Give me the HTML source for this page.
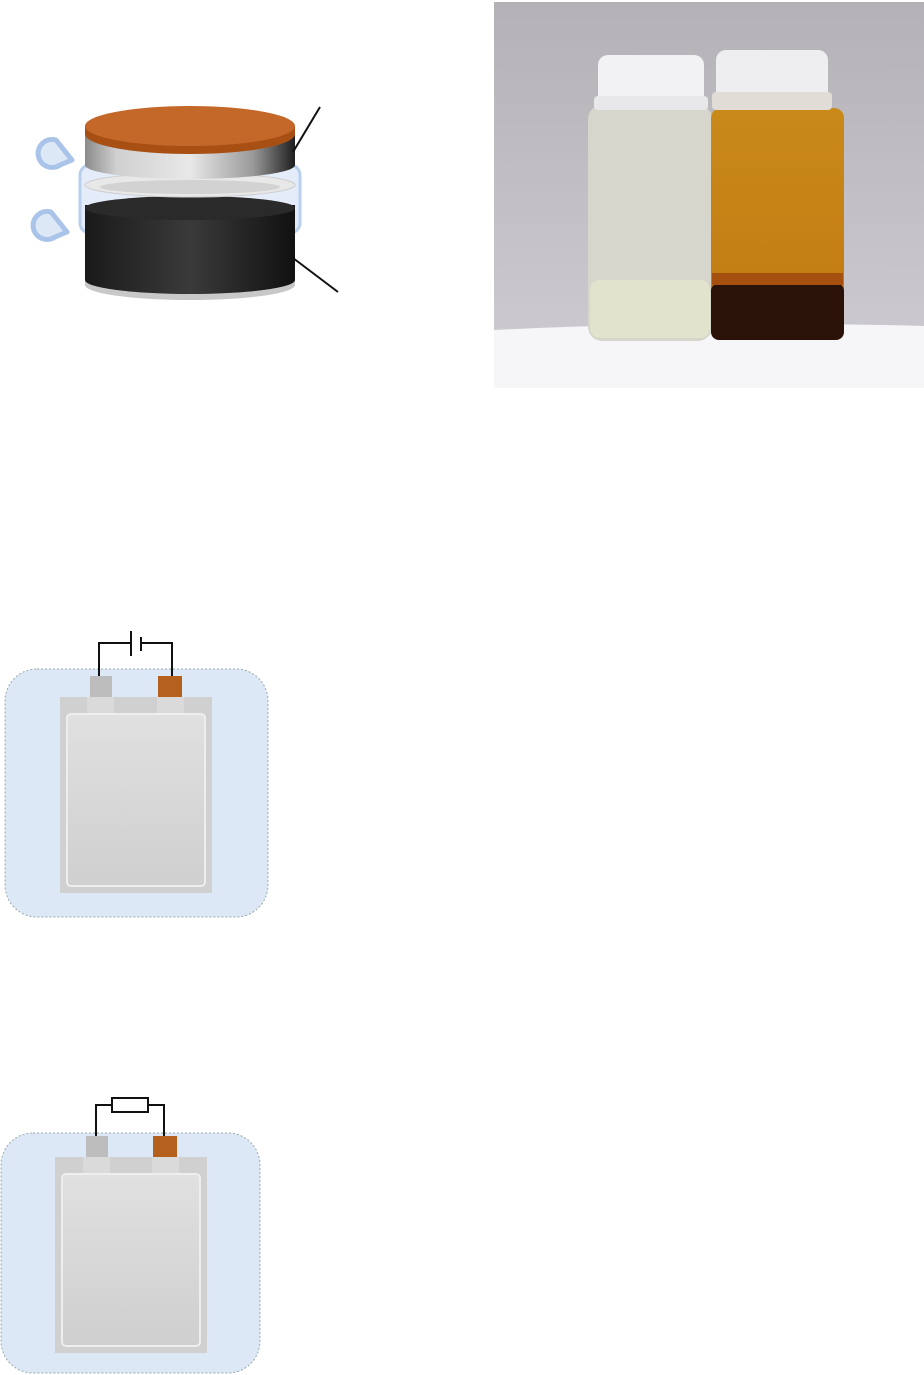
<!DOCTYPE html>
<html><head><meta charset="utf-8"><style>
html,body{margin:0;padding:0;background:#fff;width:924px;height:1375px;overflow:hidden}
svg{position:absolute;left:0;top:0}
</style></head><body>
<svg width="924" height="1375" viewBox="0 0 924 1375" xmlns="http://www.w3.org/2000/svg">
<defs>
<linearGradient id="silver" x1="0" x2="1"><stop offset="0" stop-color="#8a8a8a"/><stop offset="0.15" stop-color="#d0d0d0"/><stop offset="0.5" stop-color="#e8e8e8"/><stop offset="0.8" stop-color="#9a9a9a"/><stop offset="1" stop-color="#1e1e1e"/></linearGradient>
<linearGradient id="black" x1="0" x2="1"><stop offset="0" stop-color="#1a1a1a"/><stop offset="0.5" stop-color="#3a3a3a"/><stop offset="1" stop-color="#111"/></linearGradient>
<linearGradient id="bg" x1="0" x2="0" y1="0" y2="1"><stop offset="0" stop-color="#b4b2b7"/><stop offset="1" stop-color="#cfcdd2"/></linearGradient>
<linearGradient id="amber" x1="0" x2="0" y1="0" y2="1"><stop offset="0" stop-color="#c98a1a"/><stop offset="1" stop-color="#c27a12"/></linearGradient>
<linearGradient id="pouch" x1="0" x2="0" y1="0" y2="1"><stop offset="0" stop-color="#e0e0e0"/><stop offset="1" stop-color="#cfcfcf"/></linearGradient>
</defs>
<!-- coin cell -->
<g>
<path d="M72,160 L56,140 A14,14 0 1,0 60,165 Z" fill="#dde8f6" stroke="#a9c4e8" stroke-width="5" stroke-linejoin="round"/>
<path d="M67,232 L51,212 A14,14 0 1,0 55,237 Z" fill="#dde8f6" stroke="#a9c4e8" stroke-width="5" stroke-linejoin="round"/>
<rect x="80" y="165" width="220" height="68" rx="10" fill="#e3ecf8" stroke="#b9cfee" stroke-width="3"/>
<path d="M85,205 L85,285 A105,15 0 0,0 295,285 L295,205z" fill="#c8c8c8"/>
<path d="M85,205 L85,280 A105,14 0 0,0 295,280 L295,205z" fill="url(#black)"/>
<ellipse cx="190" cy="208" rx="105" ry="12" fill="#2a2a2a"/>
<ellipse cx="190" cy="185" rx="105" ry="12" fill="#e8e8e8" stroke="#cfcfcf"/>
<ellipse cx="190" cy="187" rx="90" ry="7" fill="#d2d2d2"/>
<path d="M85,130 L85,165 A105,14 0 0,0 295,165 L295,130z" fill="url(#silver)"/>
<path d="M85,126 L85,134 A105,20 0 0,0 295,134 L295,126z" fill="#a84f14"/>
<ellipse cx="190" cy="126" rx="105" ry="20" fill="#c4682a"/>
<line x1="293" y1="152" x2="320" y2="107" stroke="#111" stroke-width="2"/>
<line x1="293" y1="258" x2="338" y2="292" stroke="#111" stroke-width="2"/>
</g>
<!-- photo -->
<g>
<rect x="494" y="2" width="430" height="386" fill="url(#bg)"/>
<path d="M494,330 Q700,320 924,326 L924,388 L494,388z" fill="#f6f6f8"/>
<rect x="588" y="105" width="124" height="236" rx="14" fill="#d6d6cc"/>
<rect x="590" y="280" width="120" height="58" rx="10" fill="#e2e3cc"/>
<rect x="598" y="55" width="106" height="55" rx="10" fill="#f2f2f4"/>
<rect x="594" y="96" width="114" height="14" rx="4" fill="#e8e8ea"/>
<rect x="711" y="108" width="133" height="232" rx="10" fill="url(#amber)"/>
<rect x="711" y="283" width="133" height="57" rx="8" fill="#2a1208"/>
<rect x="712" y="273" width="131" height="12" fill="#a5500f"/>
<rect x="716" y="50" width="112" height="56" rx="10" fill="#eeeef0"/>
<rect x="712" y="92" width="120" height="18" rx="4" fill="#e0dcd6"/>
</g>
<!-- pouch 1 -->
<g>
<rect x="5" y="669" width="263" height="248" rx="32" fill="#dce8f5" stroke="#9aa" stroke-width="1" stroke-dasharray="2,2"/>
<path d="M99,676 V643 H130 M141,643 H172 V676" fill="none" stroke="#111" stroke-width="2"/>
<line x1="131" y1="631" x2="131" y2="656" stroke="#111" stroke-width="2"/>
<line x1="141" y1="637" x2="141" y2="651" stroke="#111" stroke-width="2"/>
<rect x="90" y="676" width="22" height="21" fill="#bdbdbd"/>
<rect x="158" y="676" width="24" height="21" fill="#b5601c"/>
<rect x="60" y="697" width="152" height="196" fill="#d0d0d0"/>
<rect x="87" y="697" width="27" height="18" fill="#dadada"/>
<rect x="157" y="697" width="27" height="18" fill="#dadada"/>
<rect x="67" y="714" width="138" height="172" rx="4" fill="url(#pouch)" stroke="#eee" stroke-width="2"/>
</g>
<!-- pouch 2 -->
<g>
<rect x="1" y="1133" width="259" height="240" rx="32" fill="#dce8f5" stroke="#9aa" stroke-width="1" stroke-dasharray="2,2"/>
<path d="M96,1136 V1105 H112 M148,1105 H164 V1136" fill="none" stroke="#111" stroke-width="2"/>
<rect x="112" y="1098" width="36" height="14" fill="#fff" stroke="#111" stroke-width="2"/>
<rect x="86" y="1136" width="22" height="21" fill="#bdbdbd"/>
<rect x="153" y="1136" width="24" height="21" fill="#b5601c"/>
<rect x="55" y="1157" width="152" height="196" fill="#d0d0d0"/>
<rect x="83" y="1157" width="27" height="18" fill="#dadada"/>
<rect x="152" y="1157" width="27" height="18" fill="#dadada"/>
<rect x="62" y="1174" width="138" height="172" rx="4" fill="url(#pouch)" stroke="#eee" stroke-width="2"/>
</g>
</svg>
</body></html>
